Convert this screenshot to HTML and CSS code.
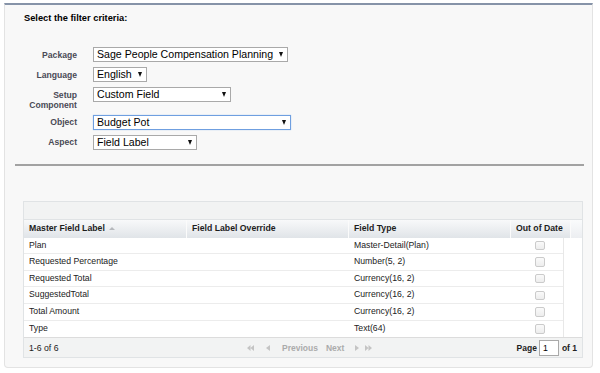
FILE: index.html
```html
<!DOCTYPE html>
<html lang="en">
<head>
  <meta charset="UTF-8" />
  <title>Translation Workbench - Filter</title>
  <link rel="stylesheet" href="styles.css">
</head>
<body>

  <div class="panel">
    <div class="title">Select the filter criteria:</div>

    <!-- Filter Form -->
    <div class="filters">
      <label class="label" for="package">Package</label>
      <div class="select w-package">
        <select id="package"><option>Sage People Compensation Planning</option></select>
      </div>

      <label class="label" for="language">Language</label>
      <div class="select w-language">
        <select id="language"><option>English</option></select>
      </div>

      <label class="label" for="component">Setup<br>Component</label>
      <div class="select w-component">
        <select id="component"><option>Custom Field</option></select>
      </div>

      <label class="label" for="object">Object</label>
      <div class="select w-object focused">
        <select id="object"><option>Budget Pot</option></select>
      </div>

      <label class="label" for="aspect">Aspect</label>
      <div class="select w-aspect">
        <select id="aspect"><option>Field Label</option></select>
      </div>
    </div>

    <div class="divider"></div>

    <!-- Results Grid -->
    <div class="grid">
      <div class="toolbar"></div>

      <div class="head">
        <div class="th">Master Field Label <span class="sort"></span></div>
        <div class="th">Field Label Override</div>
        <div class="th">Field Type</div>
        <div class="th">Out of Date</div>
        <div class="th filler"></div>
      </div>

      <div class="body">
        <div class="row">
          <div class="td">Plan</div>
          <div class="td"></div>
          <div class="td">Master-Detail(Plan)</div>
          <div class="td check"><input type="checkbox" disabled></div>
        </div>
        <div class="row">
          <div class="td">Requested Percentage</div>
          <div class="td"></div>
          <div class="td">Number(5, 2)</div>
          <div class="td check"><input type="checkbox" disabled></div>
        </div>
        <div class="row">
          <div class="td">Requested Total</div>
          <div class="td"></div>
          <div class="td">Currency(16, 2)</div>
          <div class="td check"><input type="checkbox" disabled></div>
        </div>
        <div class="row">
          <div class="td">SuggestedTotal</div>
          <div class="td"></div>
          <div class="td">Currency(16, 2)</div>
          <div class="td check"><input type="checkbox" disabled></div>
        </div>
        <div class="row">
          <div class="td">Total Amount</div>
          <div class="td"></div>
          <div class="td">Currency(16, 2)</div>
          <div class="td check"><input type="checkbox" disabled></div>
        </div>
        <div class="row">
          <div class="td">Type</div>
          <div class="td"></div>
          <div class="td">Text(64)</div>
          <div class="td check"><input type="checkbox" disabled></div>
        </div>
      </div>

      <div class="footer">
        <div class="count">1-6 of 6</div>
        <div class="pager">
          <svg class="icon first" width="7" height="6" viewBox="0 0 7 6"><path d="M3.5 0 L0 3 L3.5 6 Z M7 0 L3.5 3 L7 6 Z"/></svg>
          <svg class="icon prev" width="4" height="6" viewBox="0 0 4 6"><path d="M4 0 L0 3 L4 6 Z"/></svg>
          <span class="link prev-text">Previous</span>
          <span class="link next-text">Next</span>
          <svg class="icon next" width="4" height="6" viewBox="0 0 4 6"><path d="M0 0 L4 3 L0 6 Z"/></svg>
          <svg class="icon last" width="7" height="6" viewBox="0 0 7 6"><path d="M0 0 L3.5 3 L0 6 Z M3.5 0 L7 3 L3.5 6 Z"/></svg>
        </div>
        <div class="page">
          Page <input class="page-input" type="text" value="1"> of 1
        </div>
      </div>
    </div>
  </div>

</body>
</html>
```

FILE: styles.css
```css
* { box-sizing: border-box; }
body {
  font-family: 'Liberation Sans', Arial, sans-serif;
  margin: 0;
  background: #fff;
  color: #222;
}

.panel {
  margin: 3px 0 0 4px;
  width: 589px;
  background: #f8f8f8;
  border: 1px solid #e3e3e3;
  border-top: 2px solid #8693a8;
  border-radius: 0 0 4px 4px;
  padding-bottom: 9px;
}

.title {
  padding: 8px 0 0 19px;
  font-size: 9.3px;
  line-height: 11px;
  font-weight: bold;
  color: #000;
}

/* Filter Form */
.filters {
  display: grid;
  grid-template-columns: 72px auto;
  column-gap: 16px;
  row-gap: 5px;
  justify-items: start;
  margin-top: 23px;
}

.label {
  justify-self: end;
  text-align: right;
  font-size: 8.6px;
  line-height: 10px;
  padding-top: 2.5px;
  font-weight: bold;
  color: #4a4a56;
}

.select {
  position: relative;
  height: 15px;
}

.select select {
  display: block;
  appearance: none;
  -webkit-appearance: none;
  width: 100%;
  height: 15px;
  margin: 0;
  padding: 0 12px 0 3px;
  border: 1px solid #a9a9a9;
  border-radius: 0;
  background: #fff;
  font-family: 'Liberation Sans', Arial, sans-serif;
  font-size: 10.6px;
  line-height: 13px;
  color: #000;
  outline: none;
}

.select::after {
  content: "";
  position: absolute;
  right: 5px;
  top: 5px;
  border-left: 2.5px solid transparent;
  border-right: 2.5px solid transparent;
  border-top: 5px solid #111;
}

.select.focused select {
  border-color: #6f9fe0;
  box-shadow: 0 0 1px #9fc0ee;
}

.w-package { width: 195px; }
.w-language { width: 54px; }
.w-component { width: 138px; }
.w-object { width: 198px; }
.w-aspect { width: 104px; }

.divider {
  margin: 14.5px 8px 0 10px;
  border-top: 2px solid #a2a2a2;
}

/* Results Grid */
.grid {
  margin: 35px 9px 0 18px;
  border: 1px solid #e0e3e5;
  background: #fff;
  font-size: 8.7px;
}

.toolbar {
  height: 18px;
  background: #f2f3f3;
  border-bottom: 1px solid #e0e3e5;
}

.head {
  display: grid;
  grid-template-columns: 163px 162px 162px 60px 1fr;
  height: 17.5px;
}

.th {
  background: linear-gradient(#f8f9fa, #e0e4e8);
  border-right: 1px solid #fbfbfb;
  font-weight: bold;
  color: #1c1c1c;
  line-height: 17.5px;
  padding-left: 5px;
}

.th.filler {
  background: linear-gradient(#fafbfc, #eceef1);
  border-right: none;
}

.sort {
  display: inline-block;
  margin-left: 2px;
  vertical-align: 1px;
  border-left: 3px solid transparent;
  border-right: 3px solid transparent;
  border-bottom: 3px solid #b5b8bc;
}

.body {
  width: calc(100% - 18px);
  border-right: 1px solid #e8e8e8;
}

.row {
  display: grid;
  grid-template-columns: 163px 162px 162px 1fr;
  height: 16.67px;
  border-bottom: 1px solid #ececec;
}

.row:last-child { border-bottom: none; }

.td {
  padding-left: 5px;
  line-height: 15.67px;
  color: #222;
  white-space: nowrap;
}

.td.check {
  display: flex;
  align-items: center;
  justify-content: center;
  padding-left: 6px;
}

.td.check input {
  appearance: none;
  -webkit-appearance: none;
  width: 10px;
  height: 9.5px;
  margin: 0;
  border: 1px solid #cbcbcb;
  border-radius: 2px;
  background: linear-gradient(#fafafa, #ededed);
}

.footer {
  display: flex;
  align-items: center;
  height: 20px;
  padding: 0 5px;
  background: #f2f3f3;
  border-top: 1px solid #dcdcdc;
}

.count {
  width: 218px;
  color: #222;
}

.pager {
  display: flex;
  align-items: center;
  color: #b0b0b0;
}

.icon { fill: #c4c4c4; }
.icon.prev { margin-left: 12px; }
.icon.next { margin-left: 11px; }
.icon.last { margin-left: 6px; }

.link {
  font-weight: bold;
  font-size: 8.5px;
  color: #ababab;
}
.prev-text { margin-left: 12px; }
.next-text { margin-left: 8px; }

.page {
  margin-left: auto;
  display: flex;
  align-items: center;
  font-weight: bold;
  font-size: 8.5px;
  color: #222;
}

.page-input {
  width: 20px;
  height: 15.5px;
  margin: 0 3px 0 2px;
  padding: 0 3px;
  border: 1px solid #a9a9a9;
  font-family: 'Liberation Sans', Arial, sans-serif;
  font-size: 8.7px;
  color: #000;
}
```
